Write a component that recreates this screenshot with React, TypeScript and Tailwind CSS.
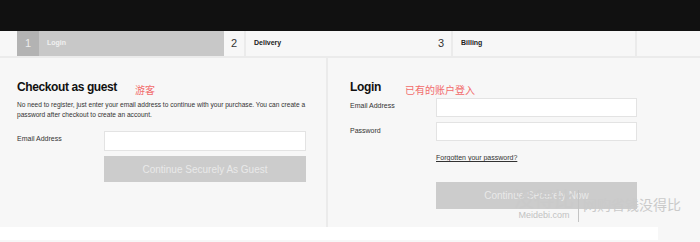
import React from "react";

const font = { fontFamily: '"Liberation Sans", Arial, sans-serif' };
const cjk = { fontFamily: '"Noto Sans CJK SC", sans-serif' };

function Step({ n, label, active, last }: { n: string; label: string; active?: boolean; last?: boolean }) {
  return (
    <div className={`flex h-full ${last ? "w-[206px] border-r-2 border-[#ebebeb]" : "w-[207px]"}`}>
      <div
        className={`flex h-full w-[22px] items-center justify-center text-[11px] ${
          active ? "bg-[#b3b3b3] text-[#ececec]" : "border-r-2 border-[#ebebeb] text-[#333]"
        }`}
      >
        {n}
      </div>
      <div
        className={`flex h-full flex-1 items-center pl-[8px] text-[7px] font-bold ${
          active ? "bg-[#c8c8c8] text-[#f0f0f0]" : "text-[#222]"
        }`}
      >
        {label}
      </div>
    </div>
  );
}

export default function App() {
  return (
    <div className="relative h-[242px] w-[700px] overflow-hidden bg-[#f7f7f7]" style={font}>
      <div className="h-[31px] bg-[#111111]" />
      <div className="flex h-[27px] border-b-2 border-[#ebebeb] pl-[17px]">
        <Step n="1" label="Login" active />
        <Step n="2" label="Delivery" />
        <Step n="3" label="Billing" last />
      </div>
      <div className="flex h-[169px]">
        <div className="w-[328px] border-r-2 border-[#ebebeb] pl-[17px] pt-[21px]">
          <h2 className="text-[12px] font-bold leading-[16px] tracking-[-0.4px] text-[#111]">Checkout as guest</h2>
          <p className="mt-[5px] w-[292px] text-[6.6px] leading-[10px] text-[#333]">
            No need to register, just enter your email address to continue with your purchase. You can create a
            password after checkout to create an account.
          </p>
          <div className="mt-[11px] flex">
            <div className="w-[87px] pt-[3px] text-[7px] text-[#333]">Email Address</div>
            <div className="h-[20px] w-[202px] border border-[#e3e3e3] bg-white" />
          </div>
          <div className="ml-[87px] mt-[5px] flex h-[26px] w-[202px] items-center justify-center bg-[#cccccc] text-[10px] text-[#e9e9e9]">
            Continue Securely As Guest
          </div>
        </div>
        <div className="flex-1 pl-[22px] pt-[21px]">
          <h2 className="text-[12px] font-bold leading-[16px] tracking-[-0.3px] text-[#111]">Login</h2>
          <div className="mt-[3px] flex">
            <div className="w-[86px] pt-[3px] text-[7px] text-[#333]">Email Address</div>
            <div className="h-[19px] w-[201px] border border-[#e3e3e3] bg-white" />
          </div>
          <div className="mt-[5px] flex">
            <div className="w-[86px] pt-[4px] text-[7px] text-[#333]">Password</div>
            <div className="h-[19px] w-[201px] border border-[#e3e3e3] bg-white" />
          </div>
          <div className="ml-[86px] mt-[12px] text-[7px] text-[#333] underline">Forgotten your password?</div>
          <div className="ml-[86px] mt-[18px] flex h-[27px] w-[201px] items-center justify-center bg-[#cccccc] text-[10px] text-[#e9e9e9]">
            Continue Securely Now
          </div>
        </div>
      </div>
      <div className="flex h-[13px]">
        <div className="w-[658px] bg-white" />
        <div className="flex-1" />
      </div>

      <div className="absolute left-[135px] top-[84px] text-[10px] leading-[12px] text-[#f26b6b]" style={cjk}>
        游客
      </div>
      <div className="absolute left-[405px] top-[84px] text-[10px] leading-[12px] text-[#f26b6b]" style={cjk}>
        已有的账户登入
      </div>

      <div className="absolute left-[514px] top-[188px] flex items-start">
        <div className="flex flex-col items-center">
          <div className="text-[20px] leading-[22px] text-[#cacaca]" style={cjk}>没得比</div>
          <div className="text-[9px] leading-[10px] text-[#c2c2c2]">Meidebi.com</div>
        </div>
        <div className="ml-[4px] mt-[2px] h-[32px] w-px bg-[#c4c4c4]" />
        <div className="ml-[4px] mt-[8px] text-[14px] leading-[16px] text-[#cacaca]" style={cjk}>网购省钱没得比</div>
      </div>
    </div>
  );
}
